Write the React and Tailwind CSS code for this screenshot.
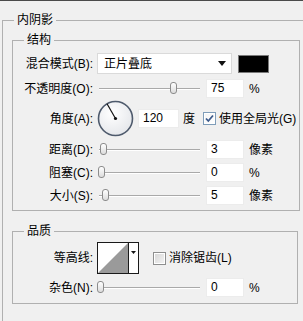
import React from 'react';

const font = "[font-family:'Liberation_Sans','Noto_Sans_CJK_SC',sans-serif]";

function Slider({ left }) {
  return (
    <div className="relative w-[103px] h-[19px] shrink-0">
      <div className="absolute left-[2px] right-0 top-[9px] h-[1px] bg-[#a9a9a9]" />
      <div className="absolute left-[2px] right-0 top-[10px] h-[1px] bg-white" />
      <div
        className="absolute top-[3px] w-[7px] h-[12px] rounded-[3px] border border-[#8c8c8c] bg-gradient-to-b from-white to-[#dcdcdc]"
        style={{ left }}
      />
    </div>
  );
}

function NumBox({ value, w = 38 }) {
  return (
    <div
      className="h-[19px] bg-white border border-[#ececec] pl-[4px] text-[12px] leading-[17px] shrink-0"
      style={{ width: w }}
    >
      {value}
    </div>
  );
}

function Check({ checked }) {
  return (
    <svg width="13" height="13" viewBox="0 0 13 13" className="shrink-0">
      <defs>
        <linearGradient id={checked ? 'cg1' : 'cg2'} x1="0" y1="0" x2="1" y2="1">
          <stop offset="0" stopColor={checked ? '#f4f4f4' : '#d8d8d8'} />
          <stop offset="1" stopColor={checked ? '#ffffff' : '#f2f2f2'} />
        </linearGradient>
      </defs>
      <rect x="0.5" y="0.5" width="12" height="12" fill="#fff" stroke={checked ? '#7f9db9' : '#8e8f8f'} />
      <rect x="2" y="2" width="9" height="9" fill={`url(#${checked ? 'cg1' : 'cg2'})`} />
      {checked && (
        <path d="M3 6.5 L5.3 9 L10 3.5" fill="none" stroke="#3c5a8c" strokeWidth="1.8" />
      )}
    </svg>
  );
}

function Row({ label, children, h = 19, mt = 4 }) {
  return (
    <div className="flex items-center" style={{ height: h, marginTop: mt }}>
      <div className="w-[80px] flex justify-end shrink-0">
        <span className="text-[12px] leading-[14px] whitespace-nowrap">{label}</span>
      </div>
      <div className="ml-[4px] flex items-center">{children}</div>
    </div>
  );
}

function SliderRow({ label, left, value, unit, mt }) {
  return (
    <Row label={label} mt={mt}>
      <Slider left={left} />
      <div className="ml-[6px]"><NumBox value={value} /></div>
      <span className="ml-[5px] text-[12px]">{unit}</span>
    </Row>
  );
}

function Dial() {
  return (
    <svg width="37" height="37" viewBox="0 0 37 37" className="shrink-0">
      <defs>
        <radialGradient id="dg" cx="0.4" cy="0.35" r="0.7">
          <stop offset="0" stopColor="#ffffff" />
          <stop offset="1" stopColor="#e4e6ea" />
        </radialGradient>
      </defs>
      <circle cx="18.5" cy="18.5" r="17" fill="url(#dg)" stroke="#4e5a6c" strokeWidth="1.6" />
      <line x1="18.5" y1="18.5" x2="10" y2="3.8" stroke="#111" strokeWidth="1.2" />
      <circle cx="18.5" cy="18.5" r="1.6" fill="#111" />
    </svg>
  );
}

function Contour() {
  return (
    <svg width="42" height="32" viewBox="0 0 42 32" className="shrink-0">
      <rect x="0.5" y="0.5" width="41" height="31" fill="#fff" stroke="#1a1a1a" />
      <polygon points="1,31 31,1 31,31" fill="#9a9a9a" />
      <line x1="31.5" y1="0.5" x2="31.5" y2="31.5" stroke="#1a1a1a" />
      <polygon points="34,9 39,9 36.5,12" fill="#111" />
    </svg>
  );
}

export default function App() {
  return (
    <div className={`w-[303px] h-[321px] overflow-hidden bg-[#f0f0f0] border-t border-[#4a4a4a] text-black ${font}`}>
      <fieldset className="ml-[2px] mt-[12px] border-l border-t border-[#b0b0b0] min-h-[320px]">
        <legend className="ml-[11px] px-[3px] text-[12px] leading-[14px]">内阴影</legend>

        <fieldset className="ml-[9px] mt-[6px] w-[288px] border border-[#b0b0b0] pb-[5px]">
          <legend className="ml-[11px] px-[3px] text-[12px] leading-[14px]">结构</legend>

          <Row label="混合模式(B):" h={21} mt={6}>
            <div className="w-[135px] h-[21px] bg-white border border-[#dadada] flex items-center justify-between pl-[6px] pr-[5px] text-[12px]">
              <span>正片叠底</span>
              <svg width="8" height="5" viewBox="0 0 8 5"><polygon points="0,0 8,0 4,5" fill="#111" /></svg>
            </div>
            <div className="ml-[6px] w-[31px] h-[18px] bg-black border border-[#7a7a7a]" />
          </Row>

          <SliderRow label="不透明度(O):" left={73} value="75" unit="%" mt={5} />

          <Row label="角度(A):" h={37} mt={2}>
            <Dial />
            <div className="ml-[4px]"><NumBox value="120" w={41} /></div>
            <span className="ml-[4px] text-[12px]">度</span>
            <div className="ml-[8px] flex items-center">
              <Check checked />
              <span className="ml-[3px] text-[12px] whitespace-nowrap">使用全局光(G)</span>
            </div>
          </Row>

          <SliderRow label="距离(D):" left={3} value="3" unit="像素" mt={3} />
          <SliderRow label="阻塞(C):" left={1} value="0" unit="%" mt={4} />
          <SliderRow label="大小(S):" left={5} value="5" unit="像素" mt={4} />
        </fieldset>

        <fieldset className="ml-[9px] mt-[13px] w-[286px] border border-[#b0b0b0] pb-[6px]">
          <legend className="ml-[11px] px-[3px] text-[12px] leading-[14px]">品质</legend>

          <Row label="等高线:" h={32} mt={4}>
            <Contour />
            <div className="ml-[14px] flex items-center">
              <Check />
              <span className="ml-[3px] text-[12px] whitespace-nowrap">消除锯齿(L)</span>
            </div>
          </Row>

          <SliderRow label="杂色(N):" left={0} value="0" unit="%" mt={4} />
        </fieldset>
      </fieldset>
    </div>
  );
}
